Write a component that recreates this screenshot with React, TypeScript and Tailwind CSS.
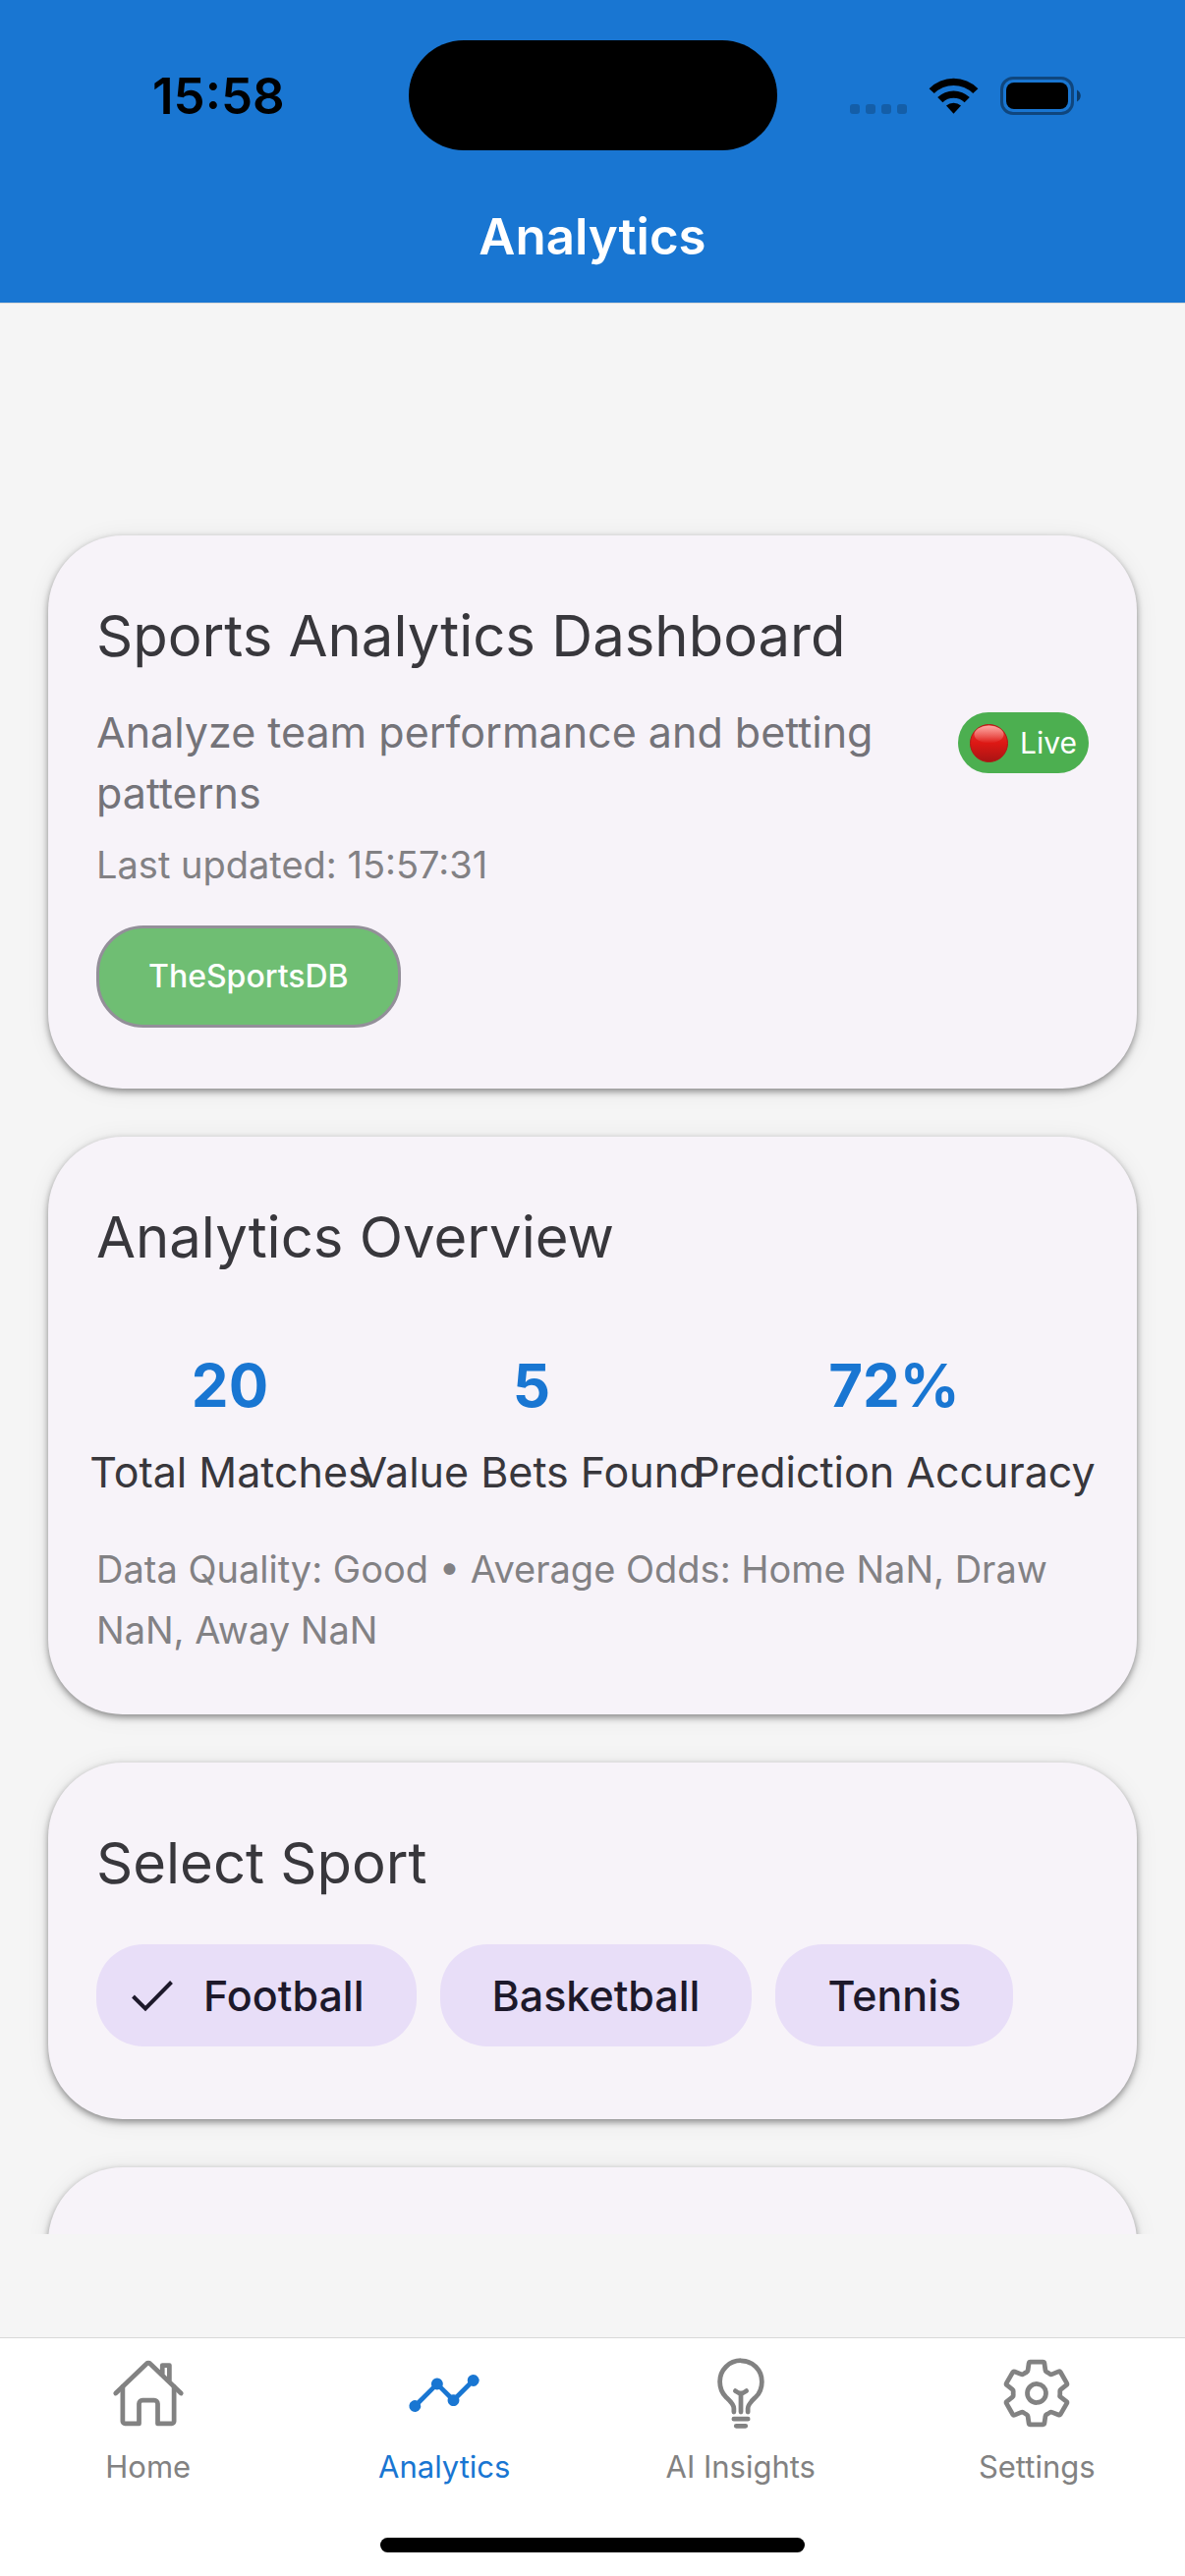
import type { ReactNode } from "react";
import {
  IoAnalytics,
  IoBulbOutline,
  IoHomeOutline,
  IoSettingsOutline,
} from "react-icons/io5";

const stats = [
  { value: "20", label: "Total Matches" },
  { value: "5", label: "Value Bets Found" },
  { value: "72%", label: "Prediction Accuracy" },
];

const sports = [
  { name: "Football", selected: true },
  { name: "Basketball", selected: false },
  { name: "Tennis", selected: false },
];

const tabs = [
  { name: "Home", Icon: IoHomeOutline, active: false },
  { name: "Analytics", Icon: IoAnalytics, active: true },
  { name: "AI Insights", Icon: IoBulbOutline, active: false },
  { name: "Settings", Icon: IoSettingsOutline, active: false },
];

function WifiIcon() {
  return (
    <svg viewBox="0 0 51 37" className="h-[37px] w-[51px]" aria-hidden="true">
      <path d="M0.6 11.2 A35 35 0 0 1 50.4 11.2 L45.2 16.1 A28 28 0 0 0 5.8 16.1 Z" />
      <path d="M9.2 20 A23.5 23.5 0 0 1 41.8 20 L36.6 25.2 A16 16 0 0 0 14.4 25.2 Z" />
      <path d="M18 28.6 A11.5 11.5 0 0 1 33 28.6 L25.5 36.8 Z" />
    </svg>
  );
}

function BatteryIcon() {
  return (
    <svg viewBox="0 0 82 39" className="h-[39px] w-[82px]" aria-hidden="true">
      <rect x="1.5" y="1.5" width="72" height="36" rx="11.5" fill="none" stroke="#000" strokeOpacity="0.4" strokeWidth="3" />
      <rect x="6" y="6" width="63" height="27" rx="8" />
      <path d="M78 13.5 C83 16 83 23 78 25.5 Z" fillOpacity="0.5" />
    </svg>
  );
}

function LiveDot() {
  return (
    <svg viewBox="0 0 39 39" className="size-[39px]" aria-hidden="true">
      <defs>
        <linearGradient id="dot-body" x1="0" y1="0" x2="0" y2="1">
          <stop offset="0" stopColor="#e23a34" />
          <stop offset="0.5" stopColor="#dd1814" />
          <stop offset="1" stopColor="#a81414" />
        </linearGradient>
        <linearGradient id="dot-shine" x1="0" y1="0" x2="0" y2="1">
          <stop offset="0" stopColor="#ffa7a2" />
          <stop offset="1" stopColor="#ffa7a2" stopOpacity="0" />
        </linearGradient>
      </defs>
      <circle cx="19.5" cy="19.5" r="19" fill="url(#dot-body)" stroke="#b01a16" />
      <ellipse cx="19.5" cy="10.5" rx="15" ry="9" fill="url(#dot-shine)" />
    </svg>
  );
}

function StatusBar() {
  return (
    <div className="grid grid-cols-[1fr_375px_1fr] items-center pt-[41px]">
      <span className="pt-0.5 pl-[155px] text-[51px] leading-[60px] font-semibold text-black">15:58</span>
      <div className="h-[112px] rounded-full bg-black" />
      <div className="flex items-center justify-end pr-[106px]">
        <div className="flex gap-1.5 pt-7">
          {[0, 1, 2, 3].map((dot) => (
            <span key={dot} className="size-[10px] rounded-[3px] bg-black/20" />
          ))}
        </div>
        <div className="px-[22px]">
          <WifiIcon />
        </div>
        <BatteryIcon />
      </div>
    </div>
  );
}

function Card({ title, children }: { title?: string; children?: ReactNode }) {
  return (
    <section className="shrink-0 rounded-[76px] bg-[#f7f3f9] px-[49px] pt-[62px] shadow-[0_3px_7px_rgba(0,0,0,0.42),0_2px_24px_rgba(0,0,0,0.07)]">
      {title && <h2 className="text-[58px] leading-[80px] text-[#38373c]">{title}</h2>}
      {children}
    </section>
  );
}

export default function App() {
  return (
    <div className="flex h-screen flex-col bg-[#f5f5f5] font-['Inter',sans-serif]">
      <header className="flex h-[309px] shrink-0 flex-col border-b border-[#d8d8d8] bg-[#1976d2]">
        <StatusBar />
        <h1 className="pt-14 text-center text-[51px] leading-[64px] font-semibold text-white">Analytics</h1>
      </header>

      <main className="mb-[105px] flex min-h-0 flex-1 flex-col gap-[49px] overflow-hidden px-[49px] pt-[236px]">
        <Card title="Sports Analytics Dashboard">
          <div className="flex items-start justify-between pt-[27px]">
            <div className="flex-1">
              <p className="text-[43px] leading-[62px] text-[#747379]">Analyze team performance and betting patterns</p>
              <p className="pt-[12px] text-[38px] leading-[60px] text-[#828184]">Last updated: 15:57:31</p>
            </div>
            <span className="mt-[11px] ml-12 flex h-[62px] items-center gap-3 rounded-full bg-[#4caf50] px-3 text-[30px] text-white">
              <LiveDot />
              Live
            </span>
          </div>
          <button
            type="button"
            className="mt-[32px] mb-[62px] h-[104px] rounded-[48px] border-3 border-[#938f99] bg-[#6fbe73] px-[50px] text-[32px] font-medium text-white"
          >
            TheSportsDB
          </button>
        </Card>

        <Card title="Analytics Overview">
          <dl className="grid grid-cols-[272fr_342fr_396fr] pt-[69px]">
            {stats.map(({ value, label }) => (
              <div key={label} className="flex min-w-0 flex-col-reverse items-center">
                <dt className="pt-4 text-[43px] leading-[60px] whitespace-nowrap text-[#38373c]">{label}</dt>
                <dd className="text-[60px] leading-[84px] font-bold text-[#1976d2]">{value}</dd>
              </div>
            ))}
          </dl>
          <p className="pt-[38px] pb-[55px] text-[38px] leading-[62px] text-[#828184]">
            Data Quality: Good • Average Odds: Home NaN, Draw NaN, Away NaN
          </p>
        </Card>

        <Card title="Select Sport">
          <div className="flex gap-6 pt-[43px] pb-[74px]">
            {sports.map(({ name, selected }) => (
              <button
                key={name}
                type="button"
                aria-pressed={selected}
                className={
                  selected
                    ? "flex h-[104px] items-center gap-[31px] rounded-[48px] bg-[#e8def8] pr-[53px] pl-[36px] text-[43px] font-medium text-[#1d192b]"
                    : "flex h-[104px] items-center rounded-[48px] bg-[#e8def8] px-[53px] text-[43px] font-medium text-[#1d192b]"
                }
              >
                {selected && (
                  <svg viewBox="0 0 42 34" className="h-[34px] w-[42px]" fill="none" stroke="currentColor" strokeWidth="4" aria-hidden="true">
                    <path d="M1.5 18 L14 30.5 L40.5 3.5" />
                  </svg>
                )}
                {name}
              </button>
            ))}
          </div>
        </Card>

        <Card>
          <div className="h-80" />
        </Card>
      </main>

      <nav className="shrink-0 border-t border-[#d8d8d8] bg-white">
        <div className="grid grid-cols-4 pt-[18px]">
          {tabs.map(({ name, Icon, active }) => (
            <a
              key={name}
              href="#"
              aria-current={active ? "page" : undefined}
              className={
                active
                  ? "flex flex-col items-center gap-[17px] text-[31px] leading-[40px] text-[#1976d2]"
                  : "flex flex-col items-center gap-[17px] text-[31px] leading-[40px] text-[#828282]"
              }
            >
              <Icon className="size-[76px]" aria-hidden="true" />
              {name}
            </a>
          ))}
        </div>
        <div className="mx-auto mt-[52px] mb-6 h-[15px] w-[432px] rounded-full bg-black" />
      </nav>
    </div>
  );
}
